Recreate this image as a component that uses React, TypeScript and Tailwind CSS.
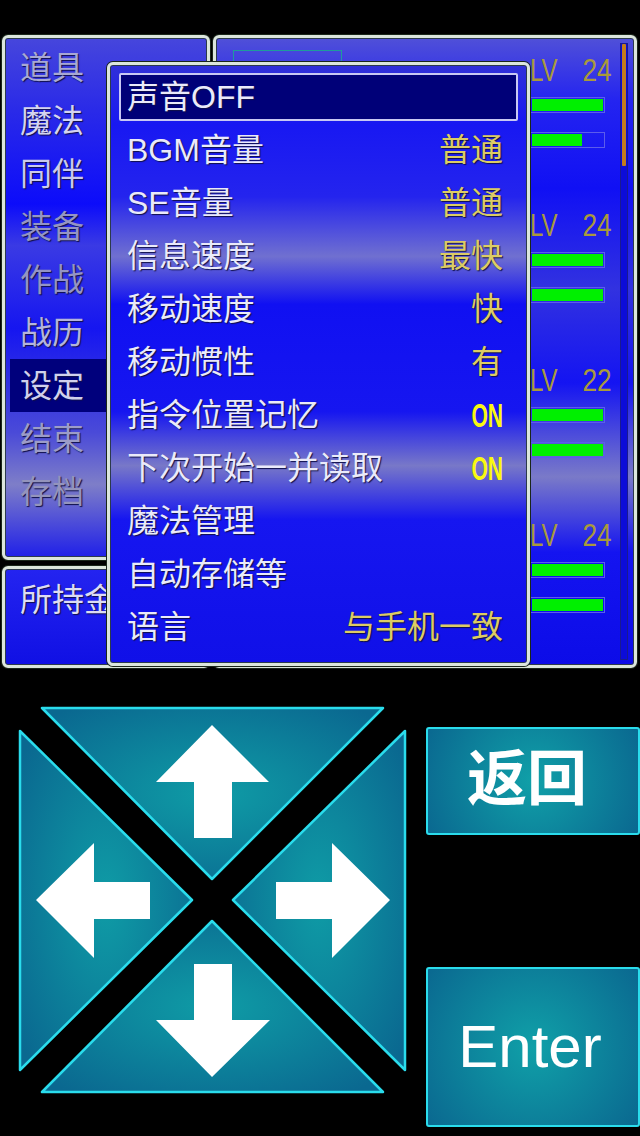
const frame =
  "border-[3px] border-[#dce6dc] rounded-[6px] shadow-[0_0_0_1px_#1a261a,inset_0_0_0_1px_#2c3a4c]"

const menuItems = [
  { label: "道具", color: "text-[#a8a8d4]" },
  { label: "魔法", color: "text-[#d4d4f0]" },
  { label: "同伴", color: "text-[#cacaec]" },
  { label: "装备", color: "text-[#9494c4]" },
  { label: "作战", color: "text-[#9494c4]" },
  { label: "战历", color: "text-[#b4b4dc]" },
  { label: "设定", color: "text-[#d0d0ec]", active: true },
  { label: "结束", color: "text-[#9c9cc8]" },
  { label: "存档", color: "text-[#9494bc]" },
]

const settings: { label: string; value?: string; on?: boolean }[] = [
  { label: "声音OFF" },
  { label: "BGM音量", value: "普通" },
  { label: "SE音量", value: "普通" },
  { label: "信息速度", value: "最快" },
  { label: "移动速度", value: "快" },
  { label: "移动惯性", value: "有" },
  { label: "指令位置记忆", value: "ON", on: true },
  { label: "下次开始一并读取", value: "ON", on: true },
  { label: "魔法管理" },
  { label: "自动存储等" },
  { label: "语言", value: "与手机一致" },
]

const party = [
  { lv: "24", hp: 100, mp: 70 },
  { lv: "24", hp: 100, mp: 100 },
  { lv: "22", hp: 100, mp: 100 },
  { lv: "24", hp: 100, mp: 100 },
]

const shadow = "[text-shadow:1px_1px_1px_#10104a]"

function Bar({ pct }: { pct: number }) {
  return (
    <div className="w-[75px] h-[16px] border border-[#5c5cec] p-[1px]">
      <div className="h-full bg-[#00f000]" style={{ width: `${pct}%` }} />
    </div>
  )
}

function DPad() {
  const tri = "fill-[url(#pad)] stroke-[#2adcec] [stroke-width:2.5] [stroke-linejoin:round]"
  return (
    <svg width="420" height="468" viewBox="0 668 420 468" className="shrink-0">
      <defs>
        <radialGradient id="pad" cx="50%" cy="50%" r="65%">
          <stop offset="0%" stopColor="#0f9ca6" />
          <stop offset="100%" stopColor="#0a6890" />
        </radialGradient>
      </defs>
      <polygon className={tri} points="42,708 383,708 212,879" />
      <polygon className={tri} points="20,731 20,1070 192,900" />
      <polygon className={tri} points="405,731 405,1070 233,900" />
      <polygon className={tri} points="42,1092 383,1092 212,921" />
      <g fill="#ffffff">
        <polygon points="212,725 269,782 232,782 232,838 194,838 194,782 156,782" />
        <polygon points="36,900 94,843 94,882 150,882 150,919 94,919 94,958" />
        <polygon points="390,900 332,843 332,882 276,882 276,919 332,919 332,958" />
        <polygon points="212,1077 270,1020 232,1020 232,964 194,964 194,1020 156,1020" />
      </g>
    </svg>
  )
}

export default function App() {
  return (
    <div className="relative w-[640px] h-[1136px] overflow-hidden bg-black font-['Liberation_Sans','Noto_Sans_CJK_SC',sans-serif]">
      <div className="h-[33px]" />

      {/* game windows */}
      <div className="relative flex h-[635px]">
        <div className="flex flex-col w-[208px] ml-[2px] mt-[2px]">
          <div className={`${frame} h-[525px] pt-[3px] bg-[linear-gradient(to_bottom,#4646dc_0%,#2a2ae8_14%,#0c0cfa_32%,#3a3ae4_40%,#1616f0_56%,#4a4ad8_76%,#7e7ec8_86%,#2020e8_100%)]`}>
            {menuItems.map((m) =>
              m.active ? (
                <div key={m.label} className="ml-[5px] w-[96px] h-[53px] pl-[10px] bg-[#00007c] flex items-center">
                  <span className={`text-[32px] leading-none ${m.color} ${shadow}`}>{m.label}</span>
                </div>
              ) : (
                <div key={m.label} className="h-[53px] pl-[15px] flex items-center">
                  <span className={`text-[32px] leading-none ${m.color} ${shadow}`}>{m.label}</span>
                </div>
              )
            )}
          </div>
          <div className={`${frame} mt-[6px] h-[102px] pt-[4px] pl-[15px] bg-[linear-gradient(to_bottom,#2424f0,#1010e4)]`}>
            <div className={`h-[53px] flex items-center text-[32px] leading-none text-[#dcdcf4] ${shadow}`}>所持金</div>
          </div>
        </div>

        <div className={`${frame} ml-[3px] mt-[2px] w-[424px] h-[633px] flex bg-[linear-gradient(to_bottom,#5050d8_0%,#2424f0_10%,#1010f4_24%,#3232e0_40%,#1414f2_55%,#7a7ac8_70%,#1414f0_82%,#0c0ce8_100%)]`}>
          <div className="flex-1">
            <div className="ml-[17px] mt-[12px] w-[109px] h-[112px] border border-[#1e9c9c]" />
          </div>
          <div className="w-[82px] pt-[17px]">
            {party.map((p, i) => (
              <div key={i} className="h-[155px]">
                <div className="h-[30px] flex justify-between items-center text-[32px] leading-none text-[#aa9a3a]">
                  <span className="inline-block scale-x-[0.75] origin-left">LV</span>
                  <span className="inline-block scale-x-[0.82] origin-right">{p.lv}</span>
                </div>
                <div className="mt-[12px]">
                  <Bar pct={p.hp} />
                </div>
                <div className="mt-[19px]">
                  <Bar pct={p.mp} />
                </div>
              </div>
            ))}
          </div>
          <div className="w-[8px] ml-[8px] mr-[6px] my-[5px] border border-[#1a1a90] bg-[#0c0cd8] flex justify-center">
            <div className="w-[4px] h-[122px] bg-[#c47c1c] rounded-[1px]" />
          </div>
        </div>

        {/* settings dialog over the windows */}
        <div className={`${frame} absolute left-[107px] top-[29px] w-[423px] h-[604px] pt-[5px] px-[9px] bg-[linear-gradient(to_bottom,#3030d8_0%,#1818f2_10%,#2424ee_22%,#7070d0_32%,#1010f2_40%,#1616f0_58%,#7878c8_67%,#1616f0_76%,#1010e8_100%)]`}>
          {settings.map((s, i) => (
            <div key={s.label} className="h-[53px] flex items-center">
              <div
                className={`w-full h-[48px] flex items-center justify-between pl-[6px] pr-[13px] border-2 rounded-[2px] ${
                  i === 0 ? "border-[#c8c8f4] bg-[#000078]" : "border-transparent"
                }`}
              >
                <span className={`text-[32px] leading-none text-[#eaeafa] ${shadow}`}>{s.label}</span>
                {s.value &&
                  (s.on ? (
                    <span className="inline-block text-[34px] font-bold leading-none text-[#f8f810] scale-x-[0.62] origin-right">
                      {s.value}
                    </span>
                  ) : (
                    <span className={`text-[32px] leading-none text-[#dccc64] ${shadow}`}>{s.value}</span>
                  ))}
              </div>
            </div>
          ))}
        </div>
      </div>

      {/* touch controls */}
      <div className="flex h-[468px]">
        <DPad />
        <div className="ml-[6px] pt-[59px] w-[220px] flex flex-col">
          <div className="h-[108px] border-2 border-[#2adcec] rounded-[3px] bg-[radial-gradient(circle_at_center,#10a0a8,#0a6890)] flex items-center justify-center pr-[12px] pb-[14px]">
            <span className="text-[60px] font-semibold leading-none text-white font-['Noto_Sans_CJK_SC',sans-serif]">返回</span>
          </div>
          <div className="mt-[132px] h-[160px] border-2 border-[#2adcec] rounded-[3px] bg-[radial-gradient(circle_at_center,#10a0a8,#0a6890)] flex items-center justify-center pr-[6px]">
            <span className="text-[60px] leading-none text-white">Enter</span>
          </div>
        </div>
      </div>
    </div>
  )
}
